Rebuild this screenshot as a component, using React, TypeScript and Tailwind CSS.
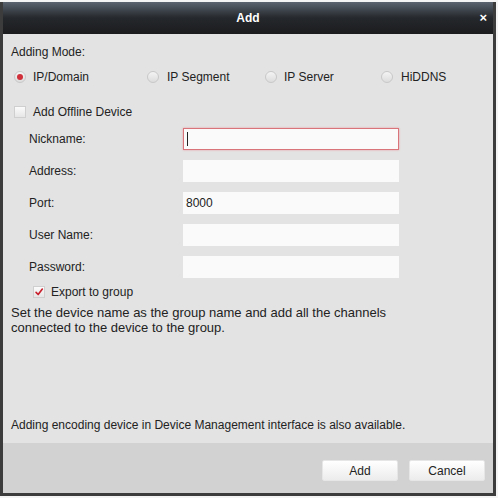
import React from 'react';

function Radio({ checked }: { checked?: boolean }) {
  return (
    <span className="w-[12px] h-[12px] rounded-full border border-[#c8c8c8] bg-gradient-to-b from-[#f4f4f4] to-[#dcdcdc] flex items-center justify-center shrink-0">
      {checked && <span className="w-[6px] h-[6px] rounded-full bg-[#d0303a]" />}
    </span>
  );
}

function Check({ checked }: { checked?: boolean }) {
  return (
    <span className="w-[12px] h-[12px] border border-[#cfcfcf] bg-gradient-to-b from-[#fbfbfb] to-[#e6e6e6] flex items-center justify-center shrink-0">
      {checked && (
        <svg width="12" height="12" viewBox="0 0 12 12">
          <path d="M2.5 6.5 L5 9 L10 2.5" fill="none" stroke="#c8202c" strokeWidth="2" strokeLinecap="round" strokeLinejoin="round" />
        </svg>
      )}
    </span>
  );
}

export default function App() {
  const fields = [
    { label: 'Nickname:', value: '', focus: true },
    { label: 'Address:', value: '' },
    { label: 'Port:', value: '8000' },
    { label: 'User Name:', value: '' },
    { label: 'Password:', value: '' },
  ];

  return (
    <div className="w-[498px] h-[498px] bg-[#f4f4f4] pt-[2px] text-[12px] text-[#222] font-['Liberation_Sans',Arial,sans-serif]">
      <div className="w-[496px] h-[494px] border-x-[3px] border-b-[3px] border-[#3c3c3c] flex flex-col bg-[#e3e3e3]">
        {/* Title bar */}
        <div className="h-[32px] bg-gradient-to-b from-[#5a6470] via-[#25282c] to-[#1b1c1e] flex items-center relative shrink-0">
          <span className="flex-1 text-center text-white font-bold text-[12px]">Add</span>
          <span className="absolute right-[6px] top-[9px] text-white font-bold text-[13px] leading-none">×</span>
        </div>

        {/* Body */}
        <div className="flex-1 px-[8px] pt-[11px] flex flex-col">
          <div className="h-[15px] leading-[15px]">Adding Mode:</div>
          <div className="flex items-center h-[20px] mt-[7px]">
            <div className="w-[133px] flex items-center pl-[3px] gap-[7px]"><Radio checked /><span>IP/Domain</span></div>
            <div className="w-[118px] flex items-center pl-[3px] gap-[8px]"><Radio /><span>IP Segment</span></div>
            <div className="w-[116px] flex items-center pl-[3px] gap-[7px]"><Radio /><span>IP Server</span></div>
            <div className="flex items-center pl-[3px] gap-[8px]"><Radio /><span>HiDDNS</span></div>
          </div>
          <div className="flex items-center h-[20px] mt-[15px] pl-[3px] gap-[7px]">
            <Check /><span>Add Offline Device</span>
          </div>
          <div className="flex flex-col gap-[10px] mt-[6px] pl-[18px]">
            {fields.map((f) => (
              <div key={f.label} className="flex items-center h-[22px]">
                <span className="w-[154px]">{f.label}</span>
                <div
                  className={`w-[216px] h-[22px] bg-[#fafafa] flex items-center px-[3px] ${
                    f.focus ? 'border border-[#d8747a] shadow-[0_0_2px_#e8a0a4]' : ''
                  }`}
                >
                  {f.focus ? <span className="w-[1px] h-[14px] bg-[#222]" /> : f.value}
                </div>
              </div>
            ))}
          </div>
          <div className="flex items-center h-[18px] mt-[5px] pl-[22px] gap-[6px]">
            <Check checked /><span>Export to group</span>
          </div>
          <div className="mt-[4px] leading-[15px] w-[400px] text-[13px]">
            Set the device name as the group name and add all the channels connected to the device to the group.
          </div>
          <div className="mt-auto mb-[10px] leading-[15px]">
            Adding encoding device in Device Management interface is also available.
          </div>
        </div>

        {/* Footer */}
        <div className="h-[50px] bg-[#d2d2d2] flex items-center justify-end gap-[11px] pr-[8px] pt-[5px] shrink-0">
          <button className="w-[76px] h-[21px] bg-gradient-to-b from-[#ffffff] to-[#ececec] border border-[#e6e6e6] rounded-[2px] text-[12px]">Add</button>
          <button className="w-[76px] h-[21px] bg-gradient-to-b from-[#ffffff] to-[#ececec] border border-[#e6e6e6] rounded-[2px] text-[12px]">Cancel</button>
        </div>
      </div>
    </div>
  );
}
